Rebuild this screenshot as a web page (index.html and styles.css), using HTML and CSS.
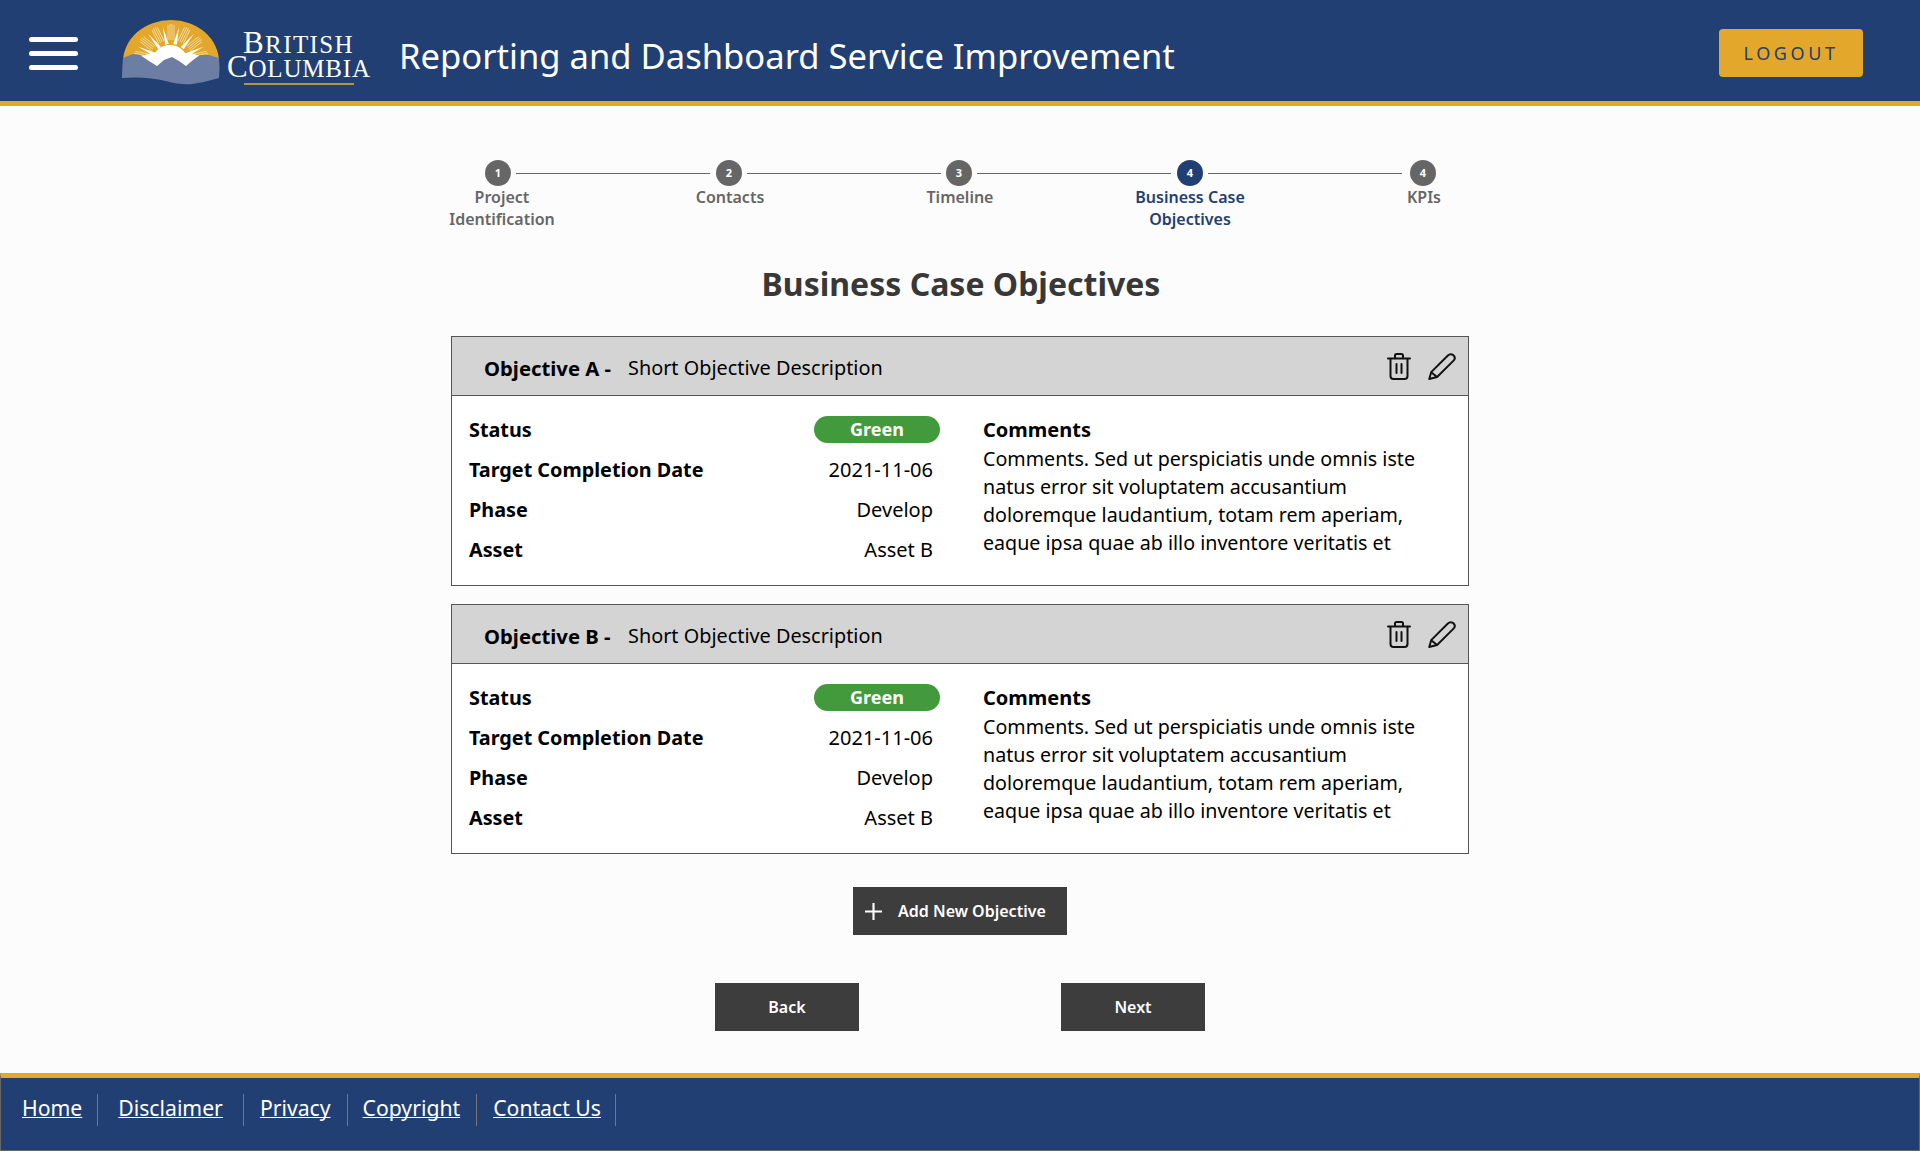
FILE: index.html
```html
<!DOCTYPE html>
<html lang="en">
<head>
<meta charset="utf-8">
<title>Reporting and Dashboard Service Improvement</title>
<link rel="stylesheet" href="styles.css">
</head>
<body>
<header class="topbar">
  <button class="burger" aria-label="Menu"><span></span><span></span><span></span></button>
  <div class="logo">
    <svg class="logo-mark" viewBox="0 0 98 66" aria-hidden="true">
      <defs>
        <path id="ray" d="M47.2 24 L49 6 L50.800 24Z" fill="#fff"/>
        <g id="hatch" stroke="#fff" stroke-width=".7" opacity=".75">
          <path d="M46 5V20M48 4V20M50 4V20M52 5V20"/>
        </g>
      </defs>
      <path d="M1 42 A48 42 0 0 1 97 42Z" fill="#e3a82b"/>
      <use href="#hatch" transform="rotate(-78 49 42)"/><use href="#hatch" transform="rotate(-52 49 42)"/>
      <use href="#hatch" transform="rotate(-26 49 42)"/><use href="#hatch"/>
      <use href="#hatch" transform="rotate(26 49 42)"/><use href="#hatch" transform="rotate(52 49 42)"/>
      <use href="#hatch" transform="rotate(78 49 42)"/>
      <use href="#ray" transform="rotate(-65 49 42)"/><use href="#ray" transform="rotate(-39 49 42)"/>
      <use href="#ray" transform="rotate(-13 49 42)"/><use href="#ray" transform="rotate(13 49 42)"/>
      <use href="#ray" transform="rotate(39 49 42)"/><use href="#ray" transform="rotate(65 49 42)"/>
      <circle cx="48" cy="43" r="18" fill="#fff"/>
      <path d="M12 38 L30 33 L68 33 L86 38 L70 48 L28 48Z" fill="#fff"/>
      <path d="M1 38 L11 34 L18 35 L27 41 L35 46 L42 40 L50 37 L57 41 L64 46 L71 40 L78 35 L87 35 L97 38 Q98 48 97 58 Q84 62 70 64 Q58 65 44 61 Q24 56 0 58 Q0 48 1 38Z" fill="#6c7ea3"/>
    </svg>
    <div class="logo-text">
      <span class="logo-line logo-first">British</span>
      <span class="logo-line logo-second">Columbia</span>
    </div>
  </div>
  <h1 class="app-title">Reporting and Dashboard Service Improvement</h1>
  <button class="logout">LOGOUT</button>
</header>

<main class="page">
  <ol class="stepper">
    <li class="step step-first"><span class="dot">1</span><span class="step-label">Project Identification</span></li>
    <li class="step"><span class="dot">2</span><span class="step-label">Contacts</span></li>
    <li class="step"><span class="dot">3</span><span class="step-label">Timeline</span></li>
    <li class="step is-active"><span class="dot">4</span><span class="step-label">Business Case Objectives</span></li>
    <li class="step step-last"><span class="dot">4</span><span class="step-label">KPIs</span></li>
  </ol>

  <h2 class="page-title">Business Case Objectives</h2>

  <section class="card">
    <div class="card-head">
      <strong class="card-key">Objective A -</strong>
      <span class="card-desc">Short Objective Description</span>
      <svg class="icon" viewBox="2 1 24 27" aria-hidden="true"><path d="M3 6.5H25M10 6V3.600Q10 2 11.600 2H16.400Q18 2 18 3.600V6M5.500 7V24Q5.500 27 8.500 27H19.500Q22.500 27 22.500 24V7M11.500 12V21M16.500 12V21"/></svg>
      <svg class="icon icon-pen" viewBox="1 .5 28 27.500" aria-hidden="true"><path d="M2 27L4 20L21 3Q23.500 .6 26.400 2.600Q29.400 5.400 27 8L10 25ZM4 20L10 25"/></svg>
    </div>
    <div class="card-body">
      <dl class="facts">
        <dt>Status</dt><dd><span class="pill">Green</span></dd>
        <dt>Target Completion Date</dt><dd>2021-11-06</dd>
        <dt>Phase</dt><dd>Develop</dd>
        <dt>Asset</dt><dd>Asset B</dd>
      </dl>
      <div class="comments">
        <strong>Comments</strong>
        <p>Comments. Sed ut perspiciatis unde omnis iste natus error sit voluptatem accusantium doloremque laudantium, totam rem aperiam, eaque ipsa quae ab illo inventore veritatis et</p>
      </div>
    </div>
  </section>

  <section class="card">
    <div class="card-head">
      <strong class="card-key">Objective B -</strong>
      <span class="card-desc">Short Objective Description</span>
      <svg class="icon" viewBox="2 1 24 27" aria-hidden="true"><path d="M3 6.5H25M10 6V3.600Q10 2 11.600 2H16.400Q18 2 18 3.600V6M5.500 7V24Q5.500 27 8.500 27H19.500Q22.500 27 22.500 24V7M11.500 12V21M16.500 12V21"/></svg>
      <svg class="icon icon-pen" viewBox="1 .5 28 27.500" aria-hidden="true"><path d="M2 27L4 20L21 3Q23.500 .6 26.400 2.600Q29.400 5.400 27 8L10 25ZM4 20L10 25"/></svg>
    </div>
    <div class="card-body">
      <dl class="facts">
        <dt>Status</dt><dd><span class="pill">Green</span></dd>
        <dt>Target Completion Date</dt><dd>2021-11-06</dd>
        <dt>Phase</dt><dd>Develop</dd>
        <dt>Asset</dt><dd>Asset B</dd>
      </dl>
      <div class="comments">
        <strong>Comments</strong>
        <p>Comments. Sed ut perspiciatis unde omnis iste natus error sit voluptatem accusantium doloremque laudantium, totam rem aperiam, eaque ipsa quae ab illo inventore veritatis et</p>
      </div>
    </div>
  </section>

  <button class="btn btn-add">
    <svg class="plus" viewBox="0 0 16 16" aria-hidden="true"><path d="M8 0V16M0 8H16"/></svg>
    Add New Objective
  </button>

  <div class="nav-buttons">
    <button class="btn btn-nav">Back</button>
    <button class="btn btn-nav">Next</button>
  </div>
</main>

<footer class="footer">
  <nav class="footer-nav">
    <a href="#">Home</a>
    <a href="#">Disclaimer</a>
    <a href="#">Privacy</a>
    <a href="#">Copyright</a>
    <a href="#">Contact Us</a>
  </nav>
</footer>
</body>
</html>
```
FILE: styles.css
```css
* { box-sizing: border-box; }
html, body { margin: 0; padding: 0; }
body {
  min-height: 1151px;
  display: flex;
  flex-direction: column;
  background: #fcfcfc;
  color: #000;
  font-family: "Noto Sans", "Open Sans", sans-serif;
  font-size: 20px;
}
button { font-family: inherit; border: 0; cursor: pointer; }

.topbar {
  height: 106px;
  flex: none;
  display: flex;
  align-items: center;
  padding: 5px 57px 0 29px;
  background: #223f74;
  border-bottom: 5px solid #e3a82b;
}
.burger {
  width: 49px;
  padding: 0;
  background: none;
  display: flex;
  flex-direction: column;
  gap: 9px;
}
.burger span { display: block; height: 5px; width: 100%; background: #fff; border-radius: 3px; }
.logo { display: flex; margin-left: 44px; width: 248px; height: 66px; }
.logo-mark { width: 98px; height: 66px; display: block; flex: none; }
.logo-text {
  display: flex;
  flex-direction: column;
  margin-left: 7px;
  padding-top: 12px;
  font-family: "Liberation Serif", serif;
  text-transform: uppercase;
  color: #fff;
  line-height: 22px;
  font-size: 25px;
  letter-spacing: .8px;
  font-weight: 400;
}
.logo-line { display: block; white-space: nowrap; }
.logo-line::first-letter { font-size: 31px; }
.logo-first {
  align-self: flex-start;
  margin-left: 16px;
  letter-spacing: 1.400px;
  position: relative;
}
.logo-first::after {
  content: "";
  position: absolute;
  left: 1px;
  right: 0;
  top: 51px;
  height: 2px;
  background: #b59445;
}
.app-title {
  margin: 4px auto 0 29px;
  color: #fff;
  font-weight: 400;
  font-size: 34.600px;
  white-space: nowrap;
}
.logout {
  width: 144px;
  height: 48px;
  background: #e3a82b;
  color: #223f74;
  font-size: 18px;
  letter-spacing: 3.600px;
  border-radius: 4px;
}

.page {
  flex: 1;
  display: flex;
  flex-direction: column;
  align-items: center;
  padding-top: 54px;
}
.stepper {
  list-style: none;
  margin: 0 0 0 12px;
  padding: 0;
  display: grid;
  grid-template-columns: 228px 228px 232px 228px 240px;
  width: 1156px;
}
.step { display: flex; flex-direction: column; align-items: center; text-align: center; color: #666; }
.dot {
  position: relative;
  left: -1px;
  width: 26px;
  height: 26px;
  border-radius: 50%;
  background: #666;
  color: #fff;
  font-size: 11px;
  font-weight: 700;
  line-height: 26px;
}
.step-first .dot { left: -4px; }
.is-active .dot { left: 0; }
.step-label {
  width: 124px;
  font-size: 16px;
  font-weight: 600;
  line-height: 22px;
  margin-top: 0;
}
.step:not(.step-last) .dot::after {
  content: "";
  position: absolute;
  left: 31px;
  top: 13px;
  width: 194px;
  height: 1px;
  background: #666;
}
.step-first .dot::after { width: 193px; }
.is-active { color: #223f74; }
.is-active .dot { background: #223f74; }

.page-title {
  margin: 32px 0 0 2px;
  font-size: 32px;
  font-weight: 700;
  line-height: 44px;
  color: #383838;
}
.card {
  width: 1018px;
  height: 250px;
  margin-top: 18px;
  border: 1px solid #555;
  background: #fff;
}
.page-title + .card { margin-top: 30px; }
.card-head {
  height: 59px;
  display: flex;
  align-items: center;
  padding: 3px 12px 0 32px;
  background: #d4d4d4;
  border-bottom: 1px solid #555;
}
.card-key { width: 144px; font-weight: 700; flex: none; font-size: 20.300px; }
.card-desc { margin-right: auto; font-size: 19.850px; }
.icon {
  width: 24px;
  height: 27px;
  margin-top: -3px;
  fill: none;
  stroke: #111;
  stroke-width: 2;
  stroke-linejoin: round;
  stroke-linecap: round;
}
.icon-pen { width: 28px; margin-left: 17px; }
.card-body {
  display: flex;
  padding: 13px 17px 0;
}
.facts {
  width: 472px;
  margin: 0;
  display: grid;
  grid-template-columns: 1fr auto;
  grid-auto-rows: 40px;
  align-items: center;
  line-height: 27px;
}
.facts dt { font-weight: 700; font-size: 19.800px; }
.facts dd { margin: 0 8px 0 0; text-align: right; }
.facts dd:first-of-type { margin-right: 1px; }
.pill {
  display: block;
  width: 126px;
  height: 27px;
  margin-left: 8px;
  border-radius: 14px;
  background: #439a3c;
  color: #fff;
  text-align: center;
  font-weight: 700;
  font-size: 18px;
  line-height: 27px;
}
.comments { margin-left: 42px; flex: 1; padding-top: 7px; }
.comments strong { display: block; line-height: 27px; font-weight: 700; }
.comments p { margin: 2px 0 0; line-height: 28px; font-size: 19.660px; }

.btn {
  height: 48px;
  background: #3d3d3d;
  color: #fff;
  font-size: 16px;
  font-weight: 600;
}
.btn-add {
  margin-top: 33px;
  width: 214px;
  display: flex;
  align-items: center;
  gap: 16px;
  padding: 0 0 0 12px;
}
.plus { width: 17px; height: 17px; stroke: #fff; stroke-width: 2; fill: none; }
.nav-buttons { display: flex; gap: 202px; margin-top: 48px; }
.btn-nav { width: 144px; }

.footer {
  height: 78px;
  flex: none;
  background: #223f74;
  border: 1px solid #666;
  border-top: 5px solid #e3a82b;
  padding: 16px 0 0 5px;
}
.footer-nav { display: flex; height: 32px; align-items: center; }
.footer-nav a {
  height: 32px;
  padding: 0 16px;
  color: #fff;
  line-height: 28px;
  font-size: 21.200px;
  border-right: 1px solid #777;
  text-decoration-thickness: 1px;
  text-decoration-skip-ink: none;
}
.footer-nav a:first-child { padding-right: 15px; }
.footer-nav a:nth-child(2) { padding: 0 20px; }
.footer-nav a:nth-child(4) { padding-left: 15px; }
.footer-nav a:nth-child(5) { padding-right: 14px; }
```
